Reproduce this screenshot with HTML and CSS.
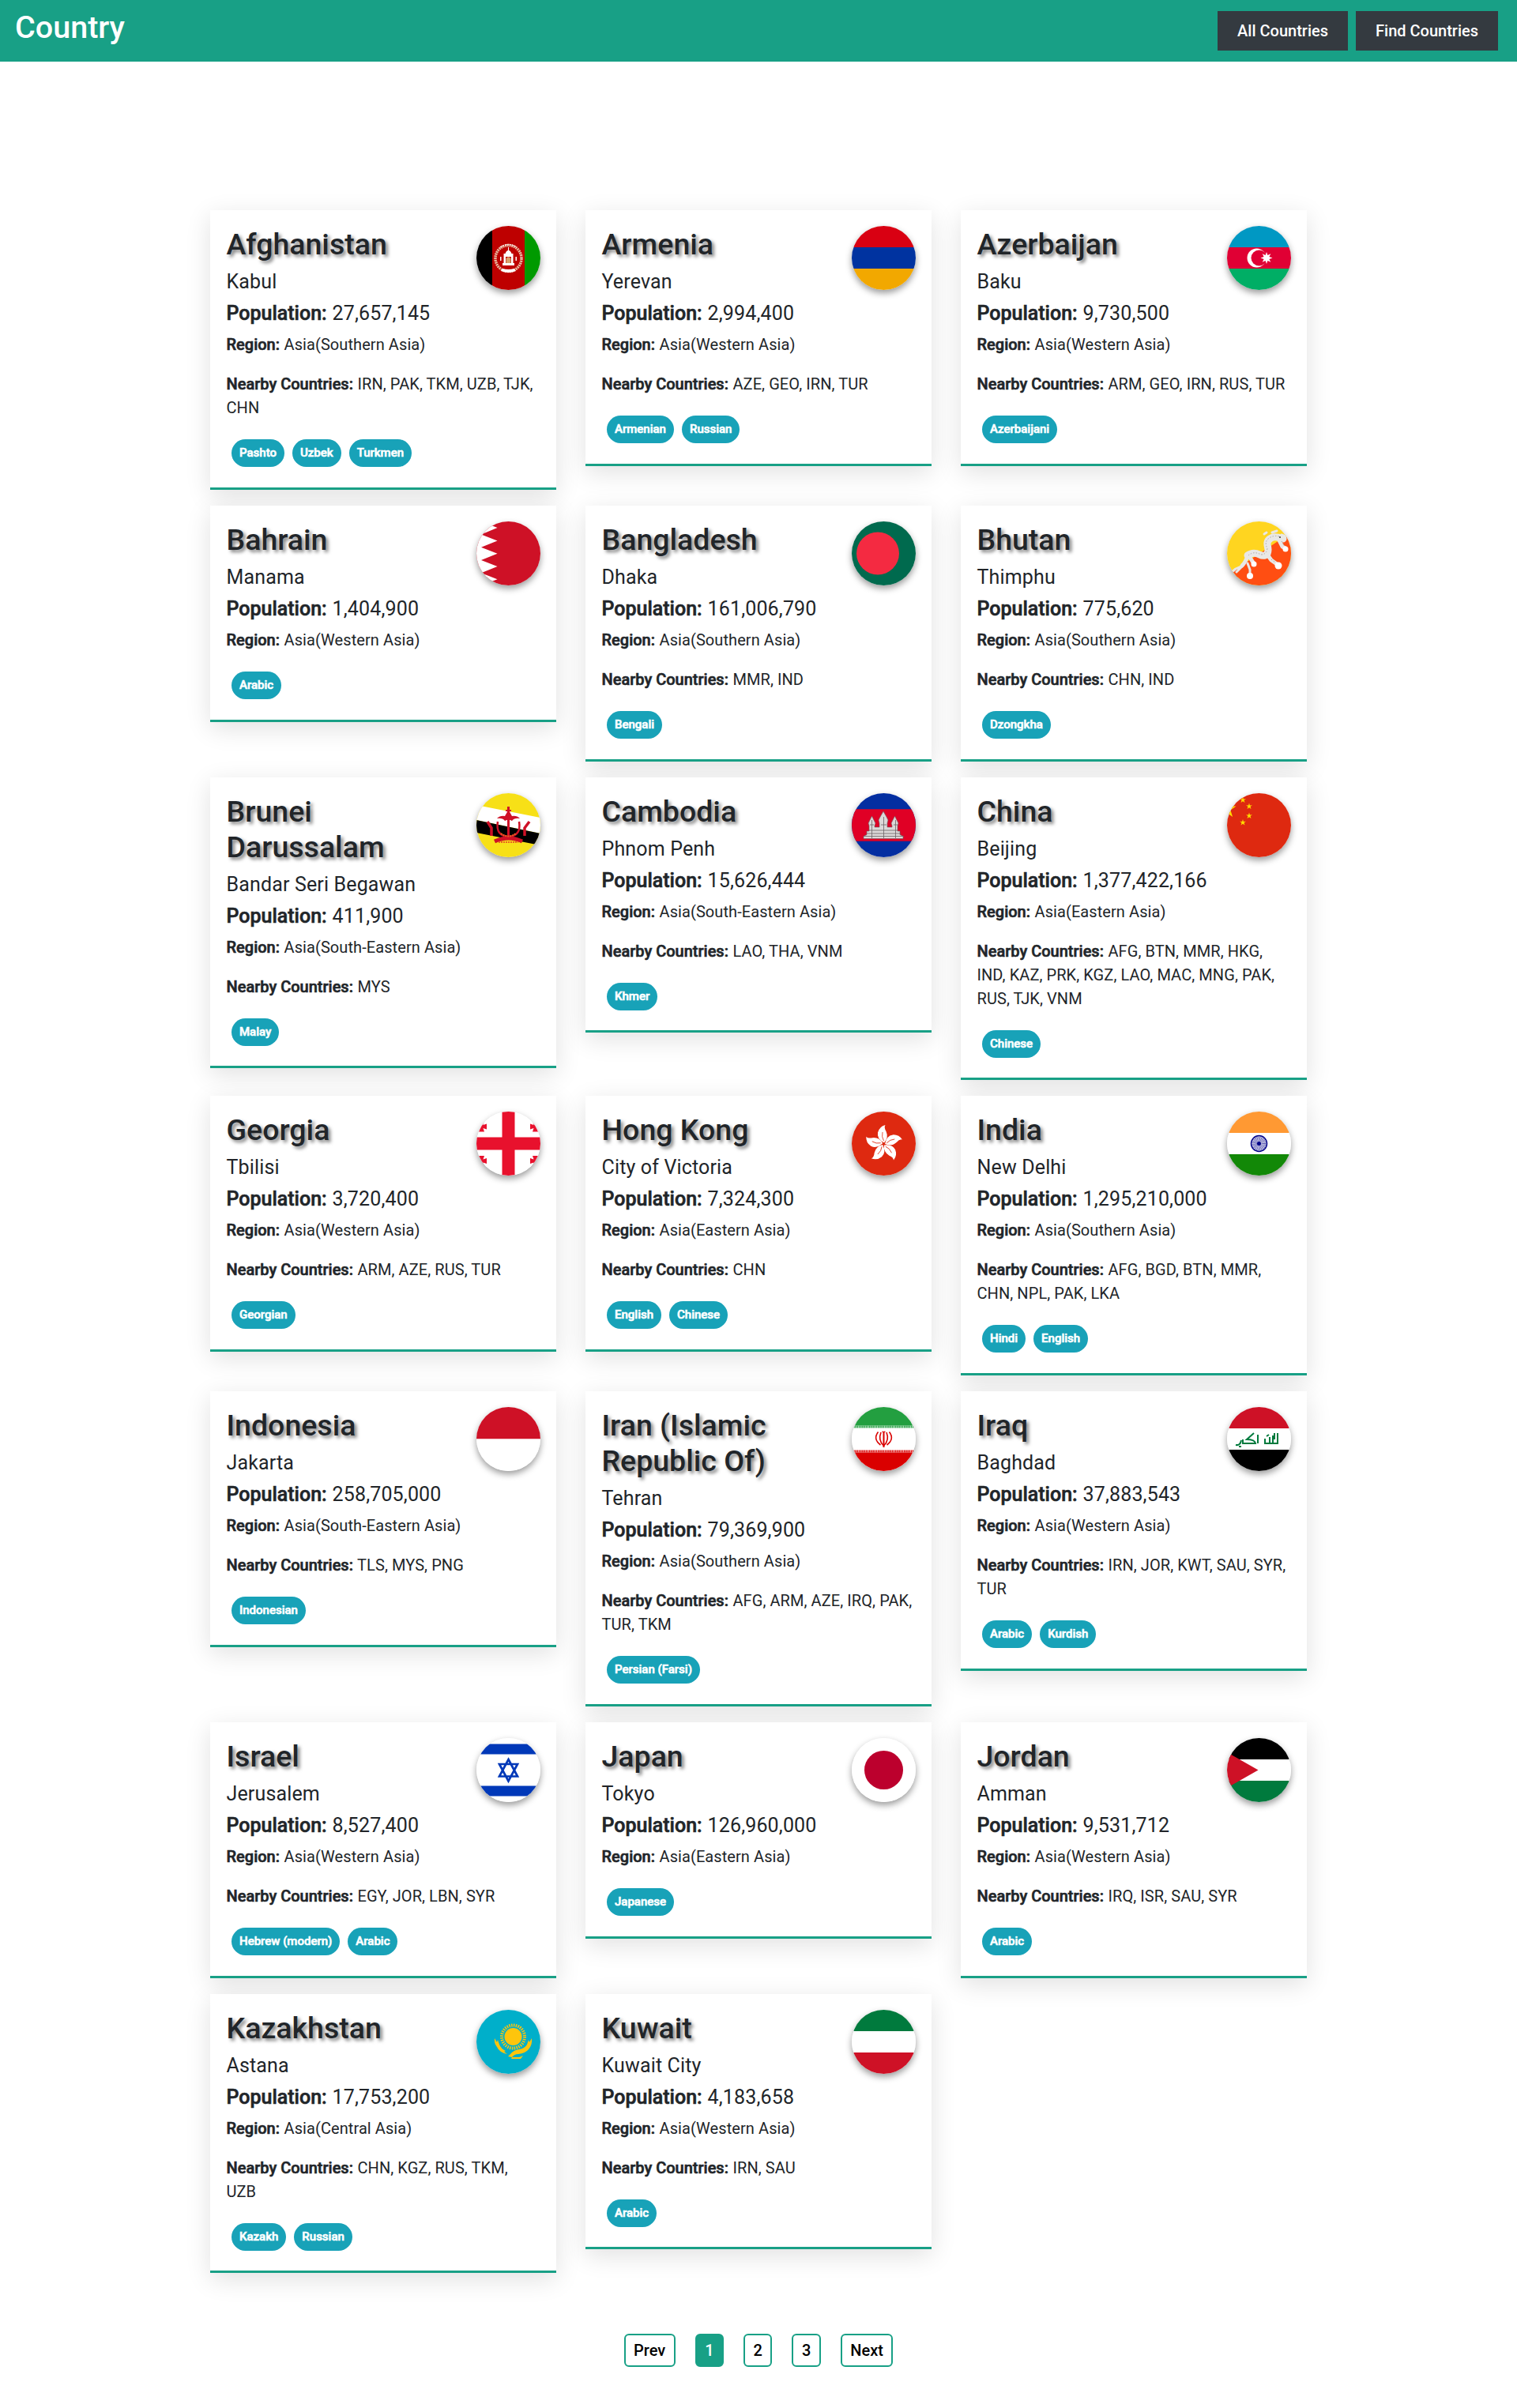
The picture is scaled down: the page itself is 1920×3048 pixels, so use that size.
FILE: index.html
```html
<!DOCTYPE html>
<html lang="en">
<head>
<meta charset="utf-8">
<title>Country</title>
<link rel="stylesheet" href="styles.css">
</head>
<body>
<header class="navbar">
  <h1 class="brand">Country</h1>
  <nav class="nav-links"><a class="nav-btn">All Countries</a><a class="nav-btn">Find Countries</a></nav>
</header>
<main class="countries">

<article class="card">
  <svg class="flag" viewBox="0 0 81 81"><path fill="#000" d="M0 0h20v81H0z"/><path fill="#be0000" d="M20 0h41v81H20z"/><path fill="#009a00" d="M61 0h20v81H61z"/><g fill="none" stroke="#e8b9a0"><circle cx="40.500" cy="41" r="16.500" stroke-width="3.500" stroke-dasharray="2 .8"/><path stroke="#fff" stroke-width="1.500" stroke-dasharray="1.200 1" d="M30 27q10.500-7 21 0"/></g><path fill="#fff" d="M33 47h15v3H33zM34.500 35h2.500v12h-2.500zM44 35h2.500v12H44zM36.500 36q0-4 4-5.500 4 1.500 4 5.500v3h-8zM40 27h1v4h-1zM33 54q7.500 2 15 0l2 3q-9.500 4-19 0zM30 39h1.500v5H30zM49.500 39H51v5h-1.500z"/><path fill="#d9a06a" d="M37.500 47v-6q3-3.500 6 0v6z"/></svg>
  <h2 class="name">Afghanistan</h2>
  <h5 class="fact">Kabul</h5>
  <h5 class="fact"><b>Population:</b> 27,657,145</h5>
  <p class="info"><b>Region:</b> Asia(Southern Asia)</p>
  <p class="info"><b>Nearby Countries:</b> IRN, PAK, TKM, UZB, TJK, CHN</p>
  <div class="langs"><span class="badge">Pashto</span><span class="badge">Uzbek</span><span class="badge">Turkmen</span></div>
</article>

<article class="card">
  <svg class="flag" viewBox="0 0 81 81"><path fill="#d90012" d="M0 0h81v27H0z"/><path fill="#0033a0" d="M0 27h81v27H0z"/><path fill="#f2a800" d="M0 54h81v27H0z"/></svg>
  <h2 class="name">Armenia</h2>
  <h5 class="fact">Yerevan</h5>
  <h5 class="fact"><b>Population:</b> 2,994,400</h5>
  <p class="info"><b>Region:</b> Asia(Western Asia)</p>
  <p class="info"><b>Nearby Countries:</b> AZE, GEO, IRN, TUR</p>
  <div class="langs"><span class="badge">Armenian</span><span class="badge">Russian</span></div>
</article>

<article class="card">
  <svg class="flag" viewBox="0 0 81 81"><path fill="#0098c3" d="M0 0h81v27H0z"/><path fill="#e00034" d="M0 27h81v27H0z"/><path fill="#00ae65" d="M0 54h81v27H0z"/><circle cx="37.500" cy="40.500" r="12" fill="#fff"/><circle cx="40.500" cy="40.500" r="10" fill="#e00034"/><path fill="#fff" d="m50 33 1.400 4.100 3.900-1.900-1.900 3.900 4.100 1.400-4.100 1.400 1.900 3.900-3.900-1.900-1.400 4.100-1.400-4.100-3.900 1.900 1.900-3.900-4.100-1.400 4.100-1.400-1.900-3.900 3.900 1.900z"/></svg>
  <h2 class="name">Azerbaijan</h2>
  <h5 class="fact">Baku</h5>
  <h5 class="fact"><b>Population:</b> 9,730,500</h5>
  <p class="info"><b>Region:</b> Asia(Western Asia)</p>
  <p class="info"><b>Nearby Countries:</b> ARM, GEO, IRN, RUS, TUR</p>
  <div class="langs"><span class="badge">Azerbaijani</span></div>
</article>

<article class="card">
  <svg class="flag" viewBox="0 0 81 81"><path fill="#ce1126" d="M0 0h81v81H0z"/><path fill="#fff" d="M0 0h6l20.500 8L6 16.500l20.500 8L6 32.700l20.500 8L6 49l20.500 8L6 65.200l20.500 8L6 81H0z"/></svg>
  <h2 class="name">Bahrain</h2>
  <h5 class="fact">Manama</h5>
  <h5 class="fact"><b>Population:</b> 1,404,900</h5>
  <p class="info"><b>Region:</b> Asia(Western Asia)</p>
  <div class="langs"><span class="badge">Arabic</span></div>
</article>

<article class="card">
  <svg class="flag" viewBox="0 0 81 81"><path fill="#006a4e" d="M0 0h81v81H0z"/><circle cx="33" cy="40.500" r="27" fill="#f42a41"/></svg>
  <h2 class="name">Bangladesh</h2>
  <h5 class="fact">Dhaka</h5>
  <h5 class="fact"><b>Population:</b> 161,006,790</h5>
  <p class="info"><b>Region:</b> Asia(Southern Asia)</p>
  <p class="info"><b>Nearby Countries:</b> MMR, IND</p>
  <div class="langs"><span class="badge">Bengali</span></div>
</article>

<article class="card">
  <svg class="flag" viewBox="0 0 81 81"><path fill="#ffd520" d="M0 0h81v81H0z"/><path fill="#ff4e12" d="M0 68 81 14v67H0z"/><g fill="none" stroke="#e9e8e6" stroke-linecap="round" stroke-linejoin="round"><path stroke-width="9" d="M71 22q-7-3-13-2-8 3-7 10 2 6 0 11-4 4-10 1-8-4-15 1"/><path stroke-width="5" d="M26 43q-2 8-7 13M28 44l5 8M51 42l5 7 7 5M66 24l4 8 4 2"/><path stroke-width="3" d="m20 56-9 4-6 5M19 57l-7 7M26 53l3 8v6M47 16l3-2M57 14l6-2M69 17l5 2"/></g><g fill="#fff"><circle cx="34" cy="54" r="3.500"/><circle cx="65" cy="56" r="4.500"/><circle cx="29" cy="69" r="4"/><circle cx="74" cy="35" r="3.500"/></g><path fill="none" stroke="#aaa7a2" stroke-dasharray="1.500 2" d="M66 19q-8-2-14 3-5 5-1 12-1 8-8 8-9-5-16 1M69 25l3 5M56 48l5 4"/><circle cx="67" cy="20" r="1" fill="#333"/></svg>
  <h2 class="name">Bhutan</h2>
  <h5 class="fact">Thimphu</h5>
  <h5 class="fact"><b>Population:</b> 775,620</h5>
  <p class="info"><b>Region:</b> Asia(Southern Asia)</p>
  <p class="info"><b>Nearby Countries:</b> CHN, IND</p>
  <div class="langs"><span class="badge">Dzongkha</span></div>
</article>

<article class="card">
  <svg class="flag" viewBox="0 0 81 81"><path fill="#f7e017" d="M0 0h81v81H0z"/><path fill="#fff" d="M0 15 81 31v20L0 34z"/><path fill="#000" d="m0 34 81 17v15L0 50z"/><g fill="none" stroke="#cf1126"><path stroke-width="2.500" d="M27 36q-3 18 13.500 19Q57 54 54 36"/><path stroke-width="3" d="M40.500 17v38"/><path fill="#cf1126" stroke="none" d="M26 32q4-4 10-3l4.500-8 4.500 8q6-1 10 3-7-1-10 3-4.500-3-9 0-3-4-10-3z"/><path stroke-width="2" d="M37 22h7"/><path stroke-width="3.500" d="m14 36 5 8v10M67 36l-6 8v10"/><path stroke-width="5" d="M23 61q17.500-8 35 0"/><path stroke-width="2" stroke="#e8641f" stroke-dasharray="2 1" d="M31 51q9.500 7 19 0M28 62h25"/></g></svg>
  <h2 class="name">Brunei Darussalam</h2>
  <h5 class="fact">Bandar Seri Begawan</h5>
  <h5 class="fact"><b>Population:</b> 411,900</h5>
  <p class="info"><b>Region:</b> Asia(South-Eastern Asia)</p>
  <p class="info"><b>Nearby Countries:</b> MYS</p>
  <div class="langs"><span class="badge">Malay</span></div>
</article>

<article class="card">
  <svg class="flag" viewBox="0 0 81 81"><path fill="#032ea1" d="M0 0h81v81H0z"/><path fill="#e00025" d="M0 20.300h81v40.500H0z"/><path fill="#dcd8d8" stroke="#6b6266" stroke-width=".6" d="M15 57.500v-3l4-2V48h3v-7l-1-3 2-4 2.500-5 2.500 5 2 4-1 3v2h6v-5l-1-4 2-4 4-7 4 7 2 4-1 4v5h6v-2l-1-3 2-4 2.500-5 2.500 5 2 4-1 3v7h3v4.500l4 2v3z"/><path fill="none" stroke="#6b6266" stroke-width=".8" d="M15 54.500h51M19 51h43M22 47h36M25.500 34v23M40.500 30v27M55.500 34v23M23 40h5M37 40h7M53 40h5"/></svg>
  <h2 class="name">Cambodia</h2>
  <h5 class="fact">Phnom Penh</h5>
  <h5 class="fact"><b>Population:</b> 15,626,444</h5>
  <p class="info"><b>Region:</b> Asia(South-Eastern Asia)</p>
  <p class="info"><b>Nearby Countries:</b> LAO, THA, VNM</p>
  <div class="langs"><span class="badge">Khmer</span></div>
</article>

<article class="card">
  <svg class="flag" viewBox="0 0 81 81"><path fill="#de2910" d="M0 0h81v81H0z"/><g fill="#ffde00"><path d="m0 8 2.700 8.400h8.800l-7.100 5.200 2.700 8.400L0 25z"/><path id="star" d="m20 4.500.9 2.900 3-.1-2.400 1.800 1 2.900-2.500-1.700-2.500 1.700 1-2.900-2.400-1.800 3 .1z"/><use href="#star" x="8" y="8"/><use href="#star" x="8" y="20"/><use href="#star" y="28.500"/></g></svg>
  <h2 class="name">China</h2>
  <h5 class="fact">Beijing</h5>
  <h5 class="fact"><b>Population:</b> 1,377,422,166</h5>
  <p class="info"><b>Region:</b> Asia(Eastern Asia)</p>
  <p class="info"><b>Nearby Countries:</b> AFG, BTN, MMR, HKG, IND, KAZ, PRK, KGZ, LAO, MAC, MNG, PAK, RUS, TJK, VNM</p>
  <div class="langs"><span class="badge">Chinese</span></div>
</article>

<article class="card">
  <svg class="flag" viewBox="0 0 81 81"><path fill="#fff" d="M0 0h81v81H0z"/><g fill="#e8112d"><path d="M32.500 0h16v81h-16zM0 32.500h81v16H0z"/><path id="bolnisi" d="M3 12.500h7l-1.500 4.500 4.500-1.500v7L8.500 21l1.500 4.500H3L4.500 21 0 22.500v-7L4.500 17z"/><use href="#bolnisi" x="68"/><use href="#bolnisi" y="43.500"/><use href="#bolnisi" x="68" y="43.500"/></g></svg>
  <h2 class="name">Georgia</h2>
  <h5 class="fact">Tbilisi</h5>
  <h5 class="fact"><b>Population:</b> 3,720,400</h5>
  <p class="info"><b>Region:</b> Asia(Western Asia)</p>
  <p class="info"><b>Nearby Countries:</b> ARM, AZE, RUS, TUR</p>
  <div class="langs"><span class="badge">Georgian</span></div>
</article>

<article class="card">
  <svg class="flag" viewBox="0 0 81 81"><path fill="#de2910" d="M0 0h81v81H0z"/><g id="petal"><path fill="#fff" d="M41 39.500q-9.500-5-8-13 2-7.500 9.500-9.500-2 3 1 8 3.500 8-2.500 14.500z"/><path fill="none" stroke="#de2910" stroke-width=".8" d="M40.500 37q-3-5-1.500-11"/></g><use href="#petal" transform="rotate(72 40.500 41)"/><use href="#petal" transform="rotate(144 40.500 41)"/><use href="#petal" transform="rotate(216 40.500 41)"/><use href="#petal" transform="rotate(288 40.500 41)"/></svg>
  <h2 class="name">Hong Kong</h2>
  <h5 class="fact">City of Victoria</h5>
  <h5 class="fact"><b>Population:</b> 7,324,300</h5>
  <p class="info"><b>Region:</b> Asia(Eastern Asia)</p>
  <p class="info"><b>Nearby Countries:</b> CHN</p>
  <div class="langs"><span class="badge">English</span><span class="badge">Chinese</span></div>
</article>

<article class="card">
  <svg class="flag" viewBox="0 0 81 81"><path fill="#f93" d="M0 0h81v27H0z"/><path fill="#fff" d="M0 27h81v27H0z"/><path fill="#128807" d="M0 54h81v27H0z"/><circle cx="40.500" cy="40.500" r="10" fill="#d5d5ec" stroke="#008" stroke-width="1.500"/><circle cx="40.500" cy="40.500" r="5" fill="none" stroke="#5a5ab0" stroke-width="8" stroke-dasharray=".6 .71"/><circle cx="40.500" cy="40.500" r="2.500" fill="#008"/></svg>
  <h2 class="name">India</h2>
  <h5 class="fact">New Delhi</h5>
  <h5 class="fact"><b>Population:</b> 1,295,210,000</h5>
  <p class="info"><b>Region:</b> Asia(Southern Asia)</p>
  <p class="info"><b>Nearby Countries:</b> AFG, BGD, BTN, MMR, CHN, NPL, PAK, LKA</p>
  <div class="langs"><span class="badge">Hindi</span><span class="badge">English</span></div>
</article>

<article class="card">
  <svg class="flag" viewBox="0 0 81 81"><path fill="#ce1126" d="M0 0h81v40.500H0z"/><path fill="#fff" d="M0 40.500h81V81H0z"/></svg>
  <h2 class="name">Indonesia</h2>
  <h5 class="fact">Jakarta</h5>
  <h5 class="fact"><b>Population:</b> 258,705,000</h5>
  <p class="info"><b>Region:</b> Asia(South-Eastern Asia)</p>
  <p class="info"><b>Nearby Countries:</b> TLS, MYS, PNG</p>
  <div class="langs"><span class="badge">Indonesian</span></div>
</article>

<article class="card">
  <svg class="flag" viewBox="0 0 81 81"><path fill="#fff" d="M0 0h81v81H0z"/><path fill="#239f40" d="M0 0h81v23.500H0z"/><path fill="#da0000" d="M0 57.500h81V81H0z"/><path stroke="#239f40" stroke-width="3" stroke-dasharray="1.500 .7" d="M0 25h81"/><path stroke="#da0000" stroke-width="3" stroke-dasharray="1.500 .7" d="M0 56h81"/><g fill="none" stroke="#da0000" stroke-width="1.600"><path d="M33.500 31.500q-7 9 3 16.500M47.500 31.500q7 9-3 16.500M37 32q-4 10 3.500 17Q48 42 44 32"/><path stroke-width="2" d="M40.500 32v19"/><path stroke-width="1.200" d="M38.500 31q2 1 4 0"/></g></svg>
  <h2 class="name">Iran (Islamic Republic Of)</h2>
  <h5 class="fact">Tehran</h5>
  <h5 class="fact"><b>Population:</b> 79,369,900</h5>
  <p class="info"><b>Region:</b> Asia(Southern Asia)</p>
  <p class="info"><b>Nearby Countries:</b> AFG, ARM, AZE, IRQ, PAK, TUR, TKM</p>
  <div class="langs"><span class="badge">Persian (Farsi)</span></div>
</article>

<article class="card">
  <svg class="flag" viewBox="0 0 81 81"><path fill="#ce1126" d="M0 0h81v27H0z"/><path fill="#fff" d="M0 27h81v27H0z"/><path fill="#000" d="M0 54h81v27H0z"/><g fill="none" stroke="#007a3d" stroke-width="2"><path d="M11 48q6 1 7-6M20 41v5h16q-1-5-11-5l9-8M15 50h3M39 35v11M48 40v6h6v-8M54 46h4V36M58 46h6V33M50 37l3-2M60 33v8"/></g></svg>
  <h2 class="name">Iraq</h2>
  <h5 class="fact">Baghdad</h5>
  <h5 class="fact"><b>Population:</b> 37,883,543</h5>
  <p class="info"><b>Region:</b> Asia(Western Asia)</p>
  <p class="info"><b>Nearby Countries:</b> IRN, JOR, KWT, SAU, SYR, TUR</p>
  <div class="langs"><span class="badge">Arabic</span><span class="badge">Kurdish</span></div>
</article>

<article class="card">
  <svg class="flag" viewBox="0 0 81 81"><path fill="#fff" d="M0 0h81v81H0z"/><path fill="#0038b8" d="M0 7.500h81v13H0zM0 60.500h81v13H0z"/><path fill="none" stroke="#0038b8" stroke-width="2.700" d="M40.500 27 52 48.500H29zM40.500 54.500 29 33h23z"/></svg>
  <h2 class="name">Israel</h2>
  <h5 class="fact">Jerusalem</h5>
  <h5 class="fact"><b>Population:</b> 8,527,400</h5>
  <p class="info"><b>Region:</b> Asia(Western Asia)</p>
  <p class="info"><b>Nearby Countries:</b> EGY, JOR, LBN, SYR</p>
  <div class="langs"><span class="badge">Hebrew (modern)</span><span class="badge">Arabic</span></div>
</article>

<article class="card">
  <svg class="flag" viewBox="0 0 81 81"><path fill="#fff" d="M0 0h81v81H0z"/><circle cx="40.500" cy="40.500" r="24.500" fill="#bc002d"/></svg>
  <h2 class="name">Japan</h2>
  <h5 class="fact">Tokyo</h5>
  <h5 class="fact"><b>Population:</b> 126,960,000</h5>
  <p class="info"><b>Region:</b> Asia(Eastern Asia)</p>
  <div class="langs"><span class="badge">Japanese</span></div>
</article>

<article class="card">
  <svg class="flag" viewBox="0 0 81 81"><path fill="#000" d="M0 0h81v27H0z"/><path fill="#fff" d="M0 27h81v27H0z"/><path fill="#007a3d" d="M0 54h81v27H0z"/><path fill="#ce1126" d="M-1 17.500 39.500 40.500-1 63.500z"/></svg>
  <h2 class="name">Jordan</h2>
  <h5 class="fact">Amman</h5>
  <h5 class="fact"><b>Population:</b> 9,531,712</h5>
  <p class="info"><b>Region:</b> Asia(Western Asia)</p>
  <p class="info"><b>Nearby Countries:</b> IRQ, ISR, SAU, SYR</p>
  <div class="langs"><span class="badge">Arabic</span></div>
</article>

<article class="card">
  <svg class="flag" viewBox="0 0 81 81"><path fill="#00afca" d="M0 0h81v81H0z"/><circle cx="46.500" cy="34" r="11" fill="#fec50c"/><circle cx="46.500" cy="34" r="14.500" fill="none" stroke="#fec50c" stroke-width="4" stroke-dasharray="1.500 1.347"/><g fill="#fec50c"><path d="m23 36 3 5 1-3 2 6q2 5 8 8l-2 1 4 3q-10-2-13-9-4-5-3-11zM70 36l-3 5-1-3-2 6q-3 5-10 6-7 1-11 6l-3 3 5 1q3-4 8-4 9-1 13-6 5-6 4-14z"/><path d="M45 60h9l5-2-3 4H44z"/></g></svg>
  <h2 class="name">Kazakhstan</h2>
  <h5 class="fact">Astana</h5>
  <h5 class="fact"><b>Population:</b> 17,753,200</h5>
  <p class="info"><b>Region:</b> Asia(Central Asia)</p>
  <p class="info"><b>Nearby Countries:</b> CHN, KGZ, RUS, TKM, UZB</p>
  <div class="langs"><span class="badge">Kazakh</span><span class="badge">Russian</span></div>
</article>

<article class="card">
  <svg class="flag" viewBox="0 0 81 81"><path fill="#007a3d" d="M0 0h81v27H0z"/><path fill="#fff" d="M0 27h81v27H0z"/><path fill="#ce1126" d="M0 54h81v27H0z"/></svg>
  <h2 class="name">Kuwait</h2>
  <h5 class="fact">Kuwait City</h5>
  <h5 class="fact"><b>Population:</b> 4,183,658</h5>
  <p class="info"><b>Region:</b> Asia(Western Asia)</p>
  <p class="info"><b>Nearby Countries:</b> IRN, SAU</p>
  <div class="langs"><span class="badge">Arabic</span></div>
</article>

</main>
<footer class="pages">
  <a class="page">Prev</a><a class="page active">1</a><a class="page">2</a><a class="page">3</a><a class="page">Next</a>
</footer>
</body>
</html>
```
FILE: styles.css
```css
* {
  box-sizing: border-box;
}

html {
  font-size: 20px;
}

body {
  margin: 0;
  background: #fff;
  color: #212529;
  font-family: Roboto, sans-serif;
  font-size: 1rem;
  line-height: 1.5;
}

.navbar {
  display: flex;
  justify-content: space-between;
  align-items: flex-start;
  height: 78px;
  padding: 14px 24px 0 19px;
  background: #18a086;
}

.brand {
  margin: -2px 0 0;
  color: #fff;
  font-size: 39.5px;
  font-weight: 500;
  line-height: 46px;
}

.nav-links {
  display: flex;
  gap: 10px;
}

.nav-btn {
  height: 50px;
  padding: 0 25px;
  background: #343a40;
  color: #fff;
  font-weight: 500;
  line-height: 50px;
}

.countries {
  display: grid;
  grid-template-columns: repeat(3, 438px);
  gap: 20px 37px;
  align-items: start;
  justify-content: center;
  padding-top: 188px;
}

.card {
  padding: 20px;
  border-bottom: 3px solid #18a086;
  background: #fff;
  box-shadow: 0 8px 30px rgba(0, 0, 0, .12);
}

.flag {
  float: right;
  display: block;
  width: 81px;
  height: 81px;
  border-radius: 50%;
  box-shadow: 0 4px 9px rgba(0, 0, 0, .4);
}

.name {
  margin: 0 0 10.1px;
  padding: 1px 0 0 .5px;
  font-size: 37.5px;
  font-weight: 500;
  line-height: 1.2;
  text-shadow: 3px 3px 4px rgba(0, 0, 0, .5);
}

.fact {
  margin: 0 0 10px;
  padding-left: .5px;
  font-size: 25px;
  font-weight: 400;
  letter-spacing: .15px;
  line-height: 1.2;
}

.fact + .fact {
  margin-bottom: 9px;
}

.info {
  margin: 0 0 20px;
  padding: 0 1px 0 .5px;
  letter-spacing: .08px;
}

.fact b,
.info b {
  margin-right: .5px;
  font-weight: 500;
  letter-spacing: 0;
  -webkit-text-stroke: .6px currentColor;
}

.langs {
  display: flex;
  gap: 10px;
  padding: 5px 0 5.7px 7px;
}

.badge {
  height: 35px;
  padding: 0 10px;
  border-radius: 17.5px;
  background: #18a2b8;
  color: #fff;
  font-size: 15px;
  font-weight: 500;
  line-height: 35px;
  -webkit-text-stroke: .6px currentColor;
}

.pages {
  display: flex;
  justify-content: center;
  gap: 25px;
  padding: 77px 0 50px;
}

.page {
  padding: 4px 10.5px;
  border: 2px solid #18a086;
  border-radius: 6px;
  color: #000;
  font-weight: 500;
  line-height: 30px;
}

.page.active {
  background: #18a086;
  color: #fff;
}
```
